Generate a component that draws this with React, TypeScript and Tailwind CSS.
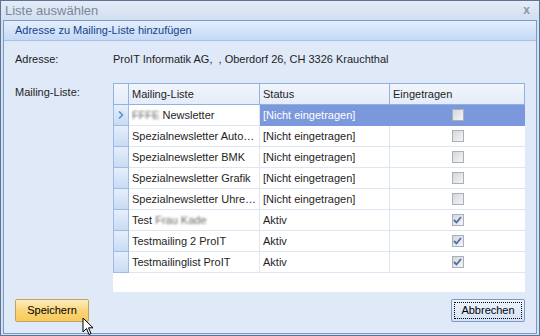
import React from 'react'

const rows = [
  { name: 'Newsletter', blurPrefix: 'FFFE', status: '[Nicht eingetragen]', checked: false, selected: true },
  { name: 'Spezialnewsletter Auto…', status: '[Nicht eingetragen]', checked: false },
  { name: 'Spezialnewsletter BMK', status: '[Nicht eingetragen]', checked: false },
  { name: 'Spezialnewsletter Grafik', status: '[Nicht eingetragen]', checked: false },
  { name: 'Spezialnewsletter Uhre…', status: '[Nicht eingetragen]', checked: false },
  { name: 'Test', blurSuffix: 'Frau Kade', status: 'Aktiv', checked: true },
  { name: 'Testmailing 2 ProIT', status: 'Aktiv', checked: true },
  { name: 'Testmailinglist ProIT', status: 'Aktiv', checked: true },
]

function CheckBox({ checked }: { checked: boolean }) {
  return (
    <div className="w-[12px] h-[12px] border border-[#a9b0ba] bg-gradient-to-br from-[#d4d7dc] to-[#f4f5f7] flex items-center justify-center">
      {checked && (
        <svg width="9" height="8" viewBox="0 0 9 8">
          <path d="M1 4 L3.5 6.5 L8 1" fill="none" stroke="#4a6ea8" strokeWidth="1.8" />
        </svg>
      )}
    </div>
  )
}

export default function App() {
  return (
    <div className="relative w-[540px] h-[336px] bg-[#d3e0f1] border border-[#5f7490] flex flex-col overflow-hidden font-['Liberation_Sans',Arial,sans-serif] text-[11px] text-[#1e1e1e] select-none">
      {/* title bar */}
      <div className="h-[19px] flex items-center justify-between px-[4px] bg-gradient-to-b from-[#e3ecf7] to-[#d2dff0]">
        <span className="text-[13px] text-[#7a8799] leading-none">Liste auswählen</span>
        <span className="text-[12px] font-bold text-[#8d97a6] leading-none mr-[5px] mt-[-2px]">x</span>
      </div>

      {/* panel */}
      <div className="flex-1 mx-[2px] mb-[1px] border border-[#7b99c6] bg-[#dfe9f8] flex flex-col">
        <div className="h-[20px] flex items-center px-[11px] bg-gradient-to-b from-[#e4eefb] to-[#c4daf7] border-b border-[#a7c1e5] text-[#15428b] text-[11px]">
          Adresse zu Mailing-Liste hinzufügen
        </div>

        <div className="flex-1 flex flex-col px-[11px] pt-[11px]">
          <div className="flex items-center h-[14px]">
            <span className="w-[98px]">Adresse:</span>
            <span>ProIT Informatik AG,&nbsp; , Oberdorf 26, CH 3326 Krauchthal</span>
          </div>

          <div className="flex mt-[17px]">
            <span className="w-[98px] pt-[1px]">Mailing-Liste:</span>
            {/* grid */}
            <div className="w-[412px] h-[209px] bg-white flex flex-col">
              <div className="flex h-[22px] bg-gradient-to-b from-[#f2f6fc] to-[#e4ecf8] border border-[#8db2e3]">
                <div className="w-[15px] border-r border-[#8db2e3]" />
                <div className="w-[131px] border-r border-[#8db2e3] flex items-center px-[3px]">Mailing-Liste</div>
                <div className="w-[130px] border-r border-[#8db2e3] flex items-center px-[3px]">Status</div>
                <div className="flex-1 flex items-center px-[3px]">Eingetragen</div>
              </div>
              {rows.map((r, i) => (
                <div key={i} className="flex h-[21px]">
                  <div className="w-[16px] border-l border-b border-r border-[#9fbbe3] bg-gradient-to-b from-[#e6effb] to-[#c9dbf4] flex items-center justify-center">
                    {r.selected && (
                      <svg width="6" height="8" viewBox="0 0 6 8">
                        <path d="M1 0.5 L4.5 4 L1 7.5" fill="none" stroke="#5b8fd6" strokeWidth="1.6" />
                      </svg>
                    )}
                  </div>
                  <div className="w-[131px] border-r border-b border-[#dde6f2] flex items-center px-[3px] whitespace-nowrap overflow-hidden">
                    {r.blurPrefix && <span className="blur-[1.3px] text-[#666] mr-[3px]">{r.blurPrefix}</span>}
                    {r.name}
                    {r.blurSuffix && <span className="blur-[1.3px] text-[#666] ml-[3px]">{r.blurSuffix}</span>}
                  </div>
                  <div className={`w-[130px] border-r border-b flex items-center px-[3px] whitespace-nowrap ${r.selected ? 'bg-[#7c98dc] text-white border-[#7c98dc]' : 'border-[#dde6f2]'}`}>
                    {r.status}
                  </div>
                  <div className={`flex-1 border-b flex items-center justify-center ${r.selected ? 'bg-[#7c98dc] border-[#7c98dc]' : 'border-[#dde6f2]'}`}>
                    <CheckBox checked={r.checked} />
                  </div>
                </div>
              ))}
            </div>
          </div>

          <div className="flex justify-between mt-[7px]">
            <button className="w-[74px] h-[23px] rounded-[2px] border border-[#c4a35d] bg-gradient-to-b from-[#fdeebf] via-[#f9d57a] to-[#f7cb5a] text-[11px] text-black">
              Speichern
            </button>
            <button className="w-[74px] h-[23px] rounded-[2px] border border-[#7e9ac4] bg-gradient-to-b from-[#eef4fc] to-[#d3e1f4] p-[2px]">
              <span className="w-full h-full flex items-center justify-center border border-dotted border-black text-black">Abbrechen</span>
            </button>
          </div>
        </div>
      </div>

      {/* mouse pointer */}
      <svg className="absolute left-[81px] top-[316px]" width="13" height="20" viewBox="0 0 13 20">
        <path d="M1 1 L1 15 L4.5 11.5 L7 17.5 L9 16.5 L6.5 10.8 L11 10.8 Z" fill="white" stroke="black" strokeWidth="1" strokeLinejoin="miter" />
      </svg>
    </div>
  )
}
